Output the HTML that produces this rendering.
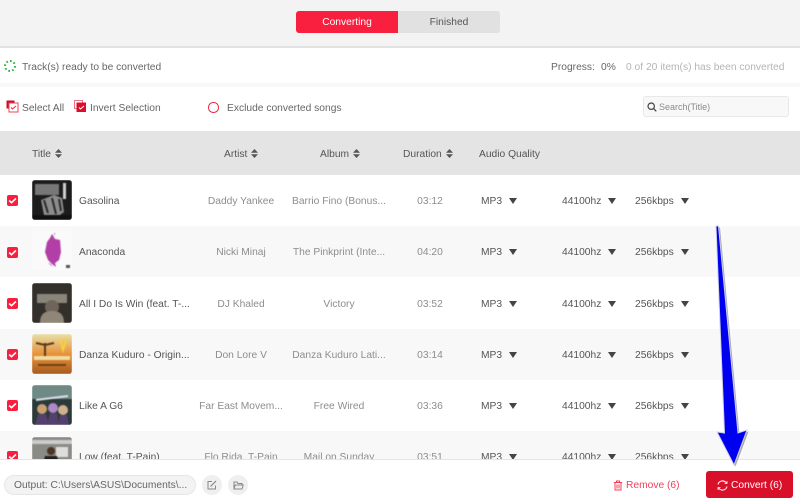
<!DOCTYPE html>
<html><head><meta charset="utf-8"><style>
html,body{margin:0;padding:0}
body{width:800px;height:504px;overflow:hidden;background:#fff;font-family:"Liberation Sans",Arial,sans-serif;font-size:10.25px;color:#555;position:relative}
.a{position:absolute;white-space:nowrap}
.c{position:absolute;white-space:nowrap;text-align:center;transform:translateX(-50%);color:#8d8d8d;line-height:14px;top:20px}
.row{position:absolute;left:0;width:800px;height:51px}
.row.g{background:#f8f8f8}
.cb{position:absolute;left:7px;top:20px;width:11px;height:11px;background:#f9203f;border-radius:2px}
.cb svg{position:absolute;left:0;top:0}
.art{position:absolute;left:32px;top:5px;width:40px;height:40px;border-radius:3px;overflow:hidden}
.art svg{filter:blur(.6px)}
.t{position:absolute;left:79px;top:20px;color:#555;line-height:14px;white-space:nowrap}
.q{position:absolute;top:20px;color:#555;line-height:14px;white-space:nowrap}
.tri{position:absolute;top:23px;width:0;height:0;border-left:4.5px solid transparent;border-right:4.5px solid transparent;border-top:6px solid #444}
.sort{display:inline-block;width:7px;height:9px;vertical-align:-1px;margin-left:4px}
.h{position:absolute;top:148px;color:#555;line-height:14px;white-space:nowrap}
</style></head><body>

<div class="a" style="left:0;top:0;width:800px;height:46px;background:#f3f3f3"></div>
<div class="a" style="left:0;top:46px;width:800px;height:2px;background:#e2e2e2"></div>
<div class="a" style="left:296px;top:11px;width:102px;height:22px;background:#f9203f;border-radius:3px 0 0 3px;color:#fff;text-align:center;line-height:24px">Converting</div>
<div class="a" style="left:398px;top:11px;width:102px;height:22px;background:#e1e1e1;border-radius:0 3px 3px 0;color:#555;text-align:center;line-height:24px">Finished</div>

<svg class="a" style="left:3px;top:59px" width="14" height="14" viewBox="0 0 14 14"><circle cx="7" cy="7" r="5" fill="none" stroke="#2fb44a" stroke-width="2" stroke-dasharray="1.700 2.200"/></svg>
<div class="a" style="left:22px;top:61px;line-height:14px;color:#666">Track(s) ready to be converted</div>
<div class="a" style="left:551px;top:61px;line-height:14px;color:#666">Progress:</div>
<div class="a" style="left:601px;top:61px;line-height:14px;color:#666">0%</div>
<div class="a" style="left:626px;top:61px;line-height:14px;color:#b5b5b5">0 of 20 item(s) has been converted</div>
<div class="a" style="left:0;top:83px;width:800px;height:4px;background:#f8f8f8"></div>

<svg class="a" style="left:6px;top:100px" width="13" height="13" viewBox="0 0 13 13"><rect x="0.500" y="0.500" width="8" height="8" fill="#c9102a"/><rect x="3" y="3" width="9" height="9" fill="#fff" stroke="#f0405a"/><path d="M5 7.500l1.500 1.500L10 6" fill="none" stroke="#e8203c" stroke-width="1"/></svg>
<div class="a" style="left:22px;top:102px;line-height:14px;color:#666">Select All</div>
<svg class="a" style="left:74px;top:100px" width="13" height="13" viewBox="0 0 13 13"><rect x="0.500" y="0.500" width="8" height="8" fill="#fff" stroke="#f0708a"/><rect x="2.500" y="2.500" width="9.500" height="9.500" fill="#d8102c"/><path d="M5 7.500l1.500 1.500L10 6" fill="none" stroke="#fff" stroke-width="1"/></svg>
<div class="a" style="left:90px;top:102px;line-height:14px;color:#666">Invert Selection</div>
<div class="a" style="left:208px;top:102px;width:8.500px;height:8.500px;border:1.600px solid #f01f3d;border-radius:50%"></div>
<div class="a" style="left:227px;top:102px;line-height:14px;color:#666">Exclude converted songs</div>

<div class="a" style="left:643px;top:96px;width:146px;height:21px;background:#f8f8f8;border:1px solid #e8e8e8;border-radius:3px;box-sizing:border-box"></div>
<svg class="a" style="left:647px;top:102px" width="10" height="10" viewBox="0 0 10 10"><circle cx="4.200" cy="4.200" r="3.200" fill="none" stroke="#444" stroke-width="1.200"/><path d="M6.600 6.600L9.300 9.300" stroke="#444" stroke-width="1.300"/></svg>
<div class="a" style="left:659px;top:101px;line-height:12px;font-size:9px;color:#8a8a8a">Search(Title)</div>

<div class="a" style="left:0;top:131px;width:800px;height:44px;background:#e4e4e4"></div>
<div class="h" style="left:32px">Title<svg class="sort" viewBox="0 0 7 9"><path d="M3.500 0L7 3.700H0zM3.500 9L0 5.300H7z" fill="#555"/></svg></div>
<div class="h" style="left:224px">Artist<svg class="sort" viewBox="0 0 7 9"><path d="M3.500 0L7 3.700H0zM3.500 9L0 5.300H7z" fill="#555"/></svg></div>
<div class="h" style="left:320px">Album<svg class="sort" viewBox="0 0 7 9"><path d="M3.500 0L7 3.700H0zM3.500 9L0 5.300H7z" fill="#555"/></svg></div>
<div class="h" style="left:403px">Duration<svg class="sort" viewBox="0 0 7 9"><path d="M3.500 0L7 3.700H0zM3.500 9L0 5.300H7z" fill="#555"/></svg></div>
<div class="h" style="left:479px">Audio Quality</div>

<div class="row" style="top:175px">
<div class="cb"><svg width="11" height="11" viewBox="0 0 11 11"><path d="M2.200 5.500l2.300 2.200 4.400-4.200" fill="none" stroke="#fff" stroke-width="1.600"/></svg></div>
<div class="art"><svg width="40" height="40" viewBox="0 0 40 40"><rect width="40" height="40" fill="#1c1c1c"/><rect x="3" y="4" width="24" height="11" fill="#777"/><path d="M9 20l13-5 8 3 2 14-8 6-12-3z" fill="#8c8c8c"/><path d="M12 20l4 13M20 18l4 16M27 19l2 12" stroke="#2a2a2a" stroke-width="2"/><rect x="31" y="3" width="3" height="16" fill="#cfcfcf"/><rect x="0" y="35" width="40" height="5" fill="#111"/></svg></div>
<div class="t">Gasolina</div>
<div class="c" style="left:241px">Daddy Yankee</div>
<div class="c" style="left:339px">Barrio Fino (Bonus...</div>
<div class="c" style="left:430px">03:12</div>
<div class="q" style="left:481px">MP3</div><div class="tri" style="left:509px"></div>
<div class="q" style="left:562px">44100hz</div><div class="tri" style="left:608px"></div>
<div class="q" style="left:635px">256kbps</div><div class="tri" style="left:681px"></div>
</div>

<div class="row g" style="top:226px">
<div class="cb" style="top:21px"><svg width="11" height="11" viewBox="0 0 11 11"><path d="M2.200 5.500l2.300 2.200 4.400-4.200" fill="none" stroke="#fff" stroke-width="1.600"/></svg></div>
<div class="art"><svg width="40" height="40" viewBox="0 0 40 40"><rect width="40" height="40" fill="#fafafa"/><path d="M20 3l3 5 5 1 1 12-2 8-4 3 1 4-4-3-4-4-3-8 2-10 3-4z" fill="#b23fa8"/><path d="M17 32l3 3M22 4l1-2" stroke="#c98cc4" stroke-width="1"/><rect x="34" y="34" width="4" height="3" fill="#555"/></svg></div>
<div class="t">Anaconda</div>
<div class="c" style="left:241px">Nicki Minaj</div>
<div class="c" style="left:339px">The Pinkprint (Inte...</div>
<div class="c" style="left:430px">04:20</div>
<div class="q" style="left:481px">MP3</div><div class="tri" style="left:509px"></div>
<div class="q" style="left:562px">44100hz</div><div class="tri" style="left:608px"></div>
<div class="q" style="left:635px">256kbps</div><div class="tri" style="left:681px"></div>
</div>

<div class="row" style="top:278px">
<div class="cb"><svg width="11" height="11" viewBox="0 0 11 11"><path d="M2.200 5.500l2.300 2.200 4.400-4.200" fill="none" stroke="#fff" stroke-width="1.600"/></svg></div>
<div class="art"><svg width="40" height="40" viewBox="0 0 40 40"><rect width="40" height="40" fill="#33302c"/><rect x="5" y="11" width="30" height="9" fill="#8a857b"/><circle cx="20" cy="24" r="7" fill="#6f655a"/><path d="M8 40c0-10 6-12 12-12s12 2 12 12z" fill="#8f8678"/></svg></div>
<div class="t">All I Do Is Win (feat. T-...</div>
<div class="c" style="left:241px">DJ Khaled</div>
<div class="c" style="left:339px">Victory</div>
<div class="c" style="left:430px">03:52</div>
<div class="q" style="left:481px">MP3</div><div class="tri" style="left:509px"></div>
<div class="q" style="left:562px">44100hz</div><div class="tri" style="left:608px"></div>
<div class="q" style="left:635px">256kbps</div><div class="tri" style="left:681px"></div>
</div>

<div class="row g" style="top:329px">
<div class="cb"><svg width="11" height="11" viewBox="0 0 11 11"><path d="M2.200 5.500l2.300 2.200 4.400-4.200" fill="none" stroke="#fff" stroke-width="1.600"/></svg></div>
<div class="art"><svg width="40" height="40" viewBox="0 0 40 40"><defs><linearGradient id="d" x1="0" y1="0" x2="0" y2="1"><stop offset="0" stop-color="#e8dfa8"/><stop offset=".5" stop-color="#e8923a"/><stop offset="1" stop-color="#a85a20"/></linearGradient></defs><rect width="40" height="40" fill="url(#d)"/><path d="M4 9l9 2 9-2M13 9v14" stroke="#5a3a1c" stroke-width="2" fill="none"/><path d="M28 4l3 12 4-12" stroke="#f6d040" stroke-width="2" fill="none"/><rect x="2" y="22" width="36" height="4" fill="#f0dca0"/><rect x="6" y="30" width="28" height="2" fill="#704010"/></svg></div>
<div class="t">Danza Kuduro - Origin...</div>
<div class="c" style="left:241px">Don Lore V</div>
<div class="c" style="left:339px">Danza Kuduro Lati...</div>
<div class="c" style="left:430px">03:14</div>
<div class="q" style="left:481px">MP3</div><div class="tri" style="left:509px"></div>
<div class="q" style="left:562px">44100hz</div><div class="tri" style="left:608px"></div>
<div class="q" style="left:635px">256kbps</div><div class="tri" style="left:681px"></div>
</div>

<div class="row" style="top:380px">
<div class="cb"><svg width="11" height="11" viewBox="0 0 11 11"><path d="M2.200 5.500l2.300 2.200 4.400-4.200" fill="none" stroke="#fff" stroke-width="1.600"/></svg></div>
<div class="art"><svg width="40" height="40" viewBox="0 0 40 40"><rect width="40" height="40" fill="#2b3a38"/><rect width="40" height="14" fill="#6f8a84"/><path d="M4 15l32-4" stroke="#dde" stroke-width="2"/><circle cx="10" cy="24" r="5" fill="#c9a070"/><circle cx="21" cy="23" r="5" fill="#b088c8"/><circle cx="31" cy="25" r="5" fill="#d0b090"/><path d="M3 40l3-11h8l3 11zM15 40l3-12h7l2 12zM26 40l2-10h7l2 10z" fill="#54406c"/></svg></div>
<div class="t">Like A G6</div>
<div class="c" style="left:241px">Far East Movem...</div>
<div class="c" style="left:339px">Free Wired</div>
<div class="c" style="left:430px">03:36</div>
<div class="q" style="left:481px">MP3</div><div class="tri" style="left:509px"></div>
<div class="q" style="left:562px">44100hz</div><div class="tri" style="left:608px"></div>
<div class="q" style="left:635px">256kbps</div><div class="tri" style="left:681px"></div>
</div>

<div class="row g" style="top:431px">
<div class="cb"><svg width="11" height="11" viewBox="0 0 11 11"><path d="M2.200 5.500l2.300 2.200 4.400-4.200" fill="none" stroke="#fff" stroke-width="1.600"/></svg></div>
<div class="art" style="top:6px"><svg width="40" height="40" viewBox="0 0 40 40"><rect width="40" height="40" fill="#8a8a86"/><rect x="0" y="3" width="40" height="4" fill="#ccc"/><rect x="24" y="10" width="12" height="10" fill="#ddd"/><circle cx="19" cy="14" r="4" fill="#4a3424"/><path d="M10 30l3-11h12l3 11z" fill="#222"/></svg></div>
<div class="t">Low (feat. T-Pain)</div>
<div class="c" style="left:241px">Flo Rida, T-Pain</div>
<div class="c" style="left:339px">Mail on Sunday</div>
<div class="c" style="left:430px">03:51</div>
<div class="q" style="left:481px">MP3</div><div class="tri" style="left:509px"></div>
<div class="q" style="left:562px">44100hz</div><div class="tri" style="left:608px"></div>
<div class="q" style="left:635px">256kbps</div><div class="tri" style="left:681px"></div>
</div>

<div class="a" style="left:0;top:459px;width:800px;height:45px;background:#fff;border-top:1px solid #e4e4e4;box-sizing:border-box"></div>
<div class="a" style="left:4px;top:475px;width:192px;height:20px;background:#f3f3f3;border:1px solid #e6e6e6;border-radius:10px;box-sizing:border-box;line-height:20px;padding-left:9px;color:#666">Output: C:\Users\ASUS\Documents\...</div>
<div class="a" style="left:202px;top:475px;width:20px;height:20px;background:#efefef;border-radius:50%"></div>
<svg class="a" style="left:207px;top:480px" width="10" height="10" viewBox="0 0 10 10"><path d="M8.500 5.500V9H1V1.500h4" fill="none" stroke="#888" stroke-width="1"/><path d="M3.500 6.500L9 1" stroke="#888" stroke-width="1.200"/></svg>
<div class="a" style="left:228px;top:475px;width:20px;height:20px;background:#efefef;border-radius:50%"></div>
<svg class="a" style="left:233px;top:481px" width="11" height="9" viewBox="0 0 11 9"><path d="M1 8V1h3l1 1.500h4V4M1 8h8l1.200-4H2.200z" fill="none" stroke="#888" stroke-width="1"/></svg>

<svg class="a" style="left:613px;top:480px" width="10" height="11" viewBox="0 0 10 11"><path d="M0.800 2.500h8.400M3.500 2.500V1h3v1.500M2 2.500V10h6V2.500M4 4.500V8.500M6 4.500V8.500" fill="none" stroke="#f0405a" stroke-width="1"/></svg>
<div class="a" style="left:626px;top:479px;line-height:14px;color:#f0405a">Remove (6)</div>

<div class="a" style="left:706px;top:471px;width:87px;height:27px;background:#d9102a;border-radius:3px"></div>
<svg class="a" style="left:717px;top:480px" width="11" height="11" viewBox="0 0 11 11"><path d="M1 4.500A4.600 4.600 0 0 1 9.300 3M10 6.500A4.600 4.600 0 0 1 1.700 8" fill="none" stroke="#fff" stroke-width="1"/><path d="M10 1v2.500H7.500M1 10V7.500h2.500" fill="none" stroke="#fff" stroke-width="0.800"/></svg>
<div class="a" style="left:731px;top:479px;line-height:14px;color:#fff">Convert (6)</div>

<svg class="a" style="left:700px;top:215px" width="60" height="260" viewBox="700 215 60 260">
<path d="M716 226L724.500 433L717 432L734 465L747 430L738 433L718.500 226Z" fill="#666" opacity=".55" transform="translate(1.500 1.500)"/>
<path d="M716 226L724.500 433L717 432L734 465L747 430L738 433L718.500 226Z" fill="#0000f0" stroke="#cfd0e8" stroke-width="1"/>
</svg>

</body></html>
